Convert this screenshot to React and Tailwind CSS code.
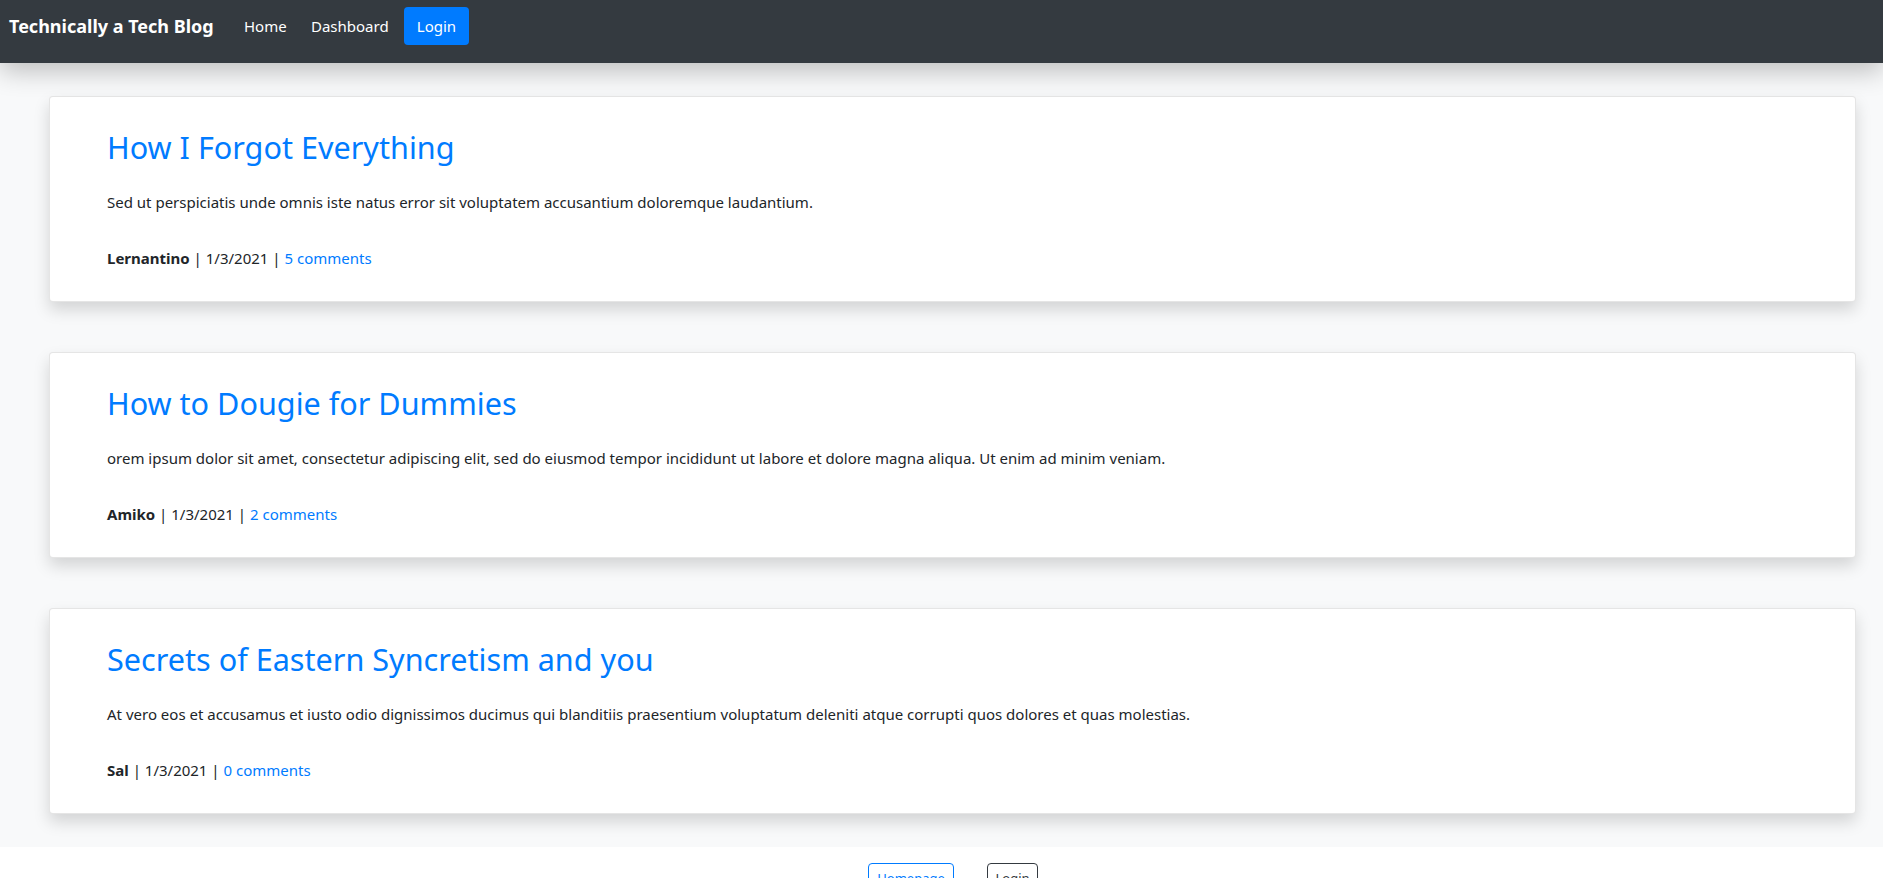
import React from 'react';

const posts = [
  {
    title: 'How I Forgot Everything',
    body: 'Sed ut perspiciatis unde omnis iste natus error sit voluptatem accusantium doloremque laudantium.',
    author: 'Lernantino',
    date: '1/3/2021',
    comments: 5,
  },
  {
    title: 'How to Dougie for Dummies',
    body: 'orem ipsum dolor sit amet, consectetur adipiscing elit, sed do eiusmod tempor incididunt ut labore et dolore magna aliqua. Ut enim ad minim veniam.',
    author: 'Amiko',
    date: '1/3/2021',
    comments: 2,
  },
  {
    title: 'Secrets of Eastern Syncretism and you',
    body: 'At vero eos et accusamus et iusto odio dignissimos ducimus qui blanditiis praesentium voluptatum deleniti atque corrupti quos dolores et quas molestias.',
    author: 'Sal',
    date: '1/3/2021',
    comments: 0,
  },
];

function PostCard({ post }) {
  return (
    <div className="bg-white border border-black/10 rounded shadow-[0_8px_16px_rgba(0,0,0,0.15)] pl-[57px] pr-6 pt-[31px] pb-[31px]">
      <h2 className="text-[30.6px] leading-[38px] text-[#007bff]">{post.title}</h2>
      <p className="mt-[24px] text-[15px] leading-6 text-[#212529]">{post.body}</p>
      <p className="mt-[32px] text-[15px] leading-6 text-[#212529]">
        <span className="font-bold">{post.author}</span> | {post.date} |{' '}
        <a className="text-[#007bff]">{post.comments} comments</a>
      </p>
    </div>
  );
}

export default function App() {
  return (
    <div className="min-h-[878px] bg-white font-['Noto_Sans',sans-serif]">
      {/* Navbar */}
      <nav className="relative z-10 h-[63px] bg-[#343a40] flex items-start pt-[7px] pl-[9px] shadow-[0_8px_26px_rgba(0,0,0,0.24)]">
        <div className="h-[38px] flex items-center">
          <span className="w-[235px] text-white font-bold text-[18px]">Technically a Tech Blog</span>
          <a className="w-[67px] text-white text-[15px]">Home</a>
          <a className="w-[93px] text-white text-[15px]">Dashboard</a>
          <a className="h-[38px] w-[65px] flex items-center justify-center bg-[#007bff] text-white text-[15px] rounded">Login</a>
        </div>
      </nav>

      {/* Posts */}
      <main className="bg-[#f8f9fa] pl-[49px] pr-[27px] pt-[33px] pb-[33px] flex flex-col gap-[50px]">
        {posts.map((post) => (
          <PostCard key={post.title} post={post} />
        ))}
      </main>

      {/* Footer */}
      <footer className="flex justify-center gap-[33px] pt-[16px] pl-[23px]">
        <button className="h-[31px] w-[86px] text-[13px] text-[#007bff] border border-[#007bff] rounded">Homepage</button>
        <button className="h-[31px] w-[51px] text-[13px] text-[#343a40] border border-[#343a40] rounded">Login</button>
      </footer>
    </div>
  );
}
